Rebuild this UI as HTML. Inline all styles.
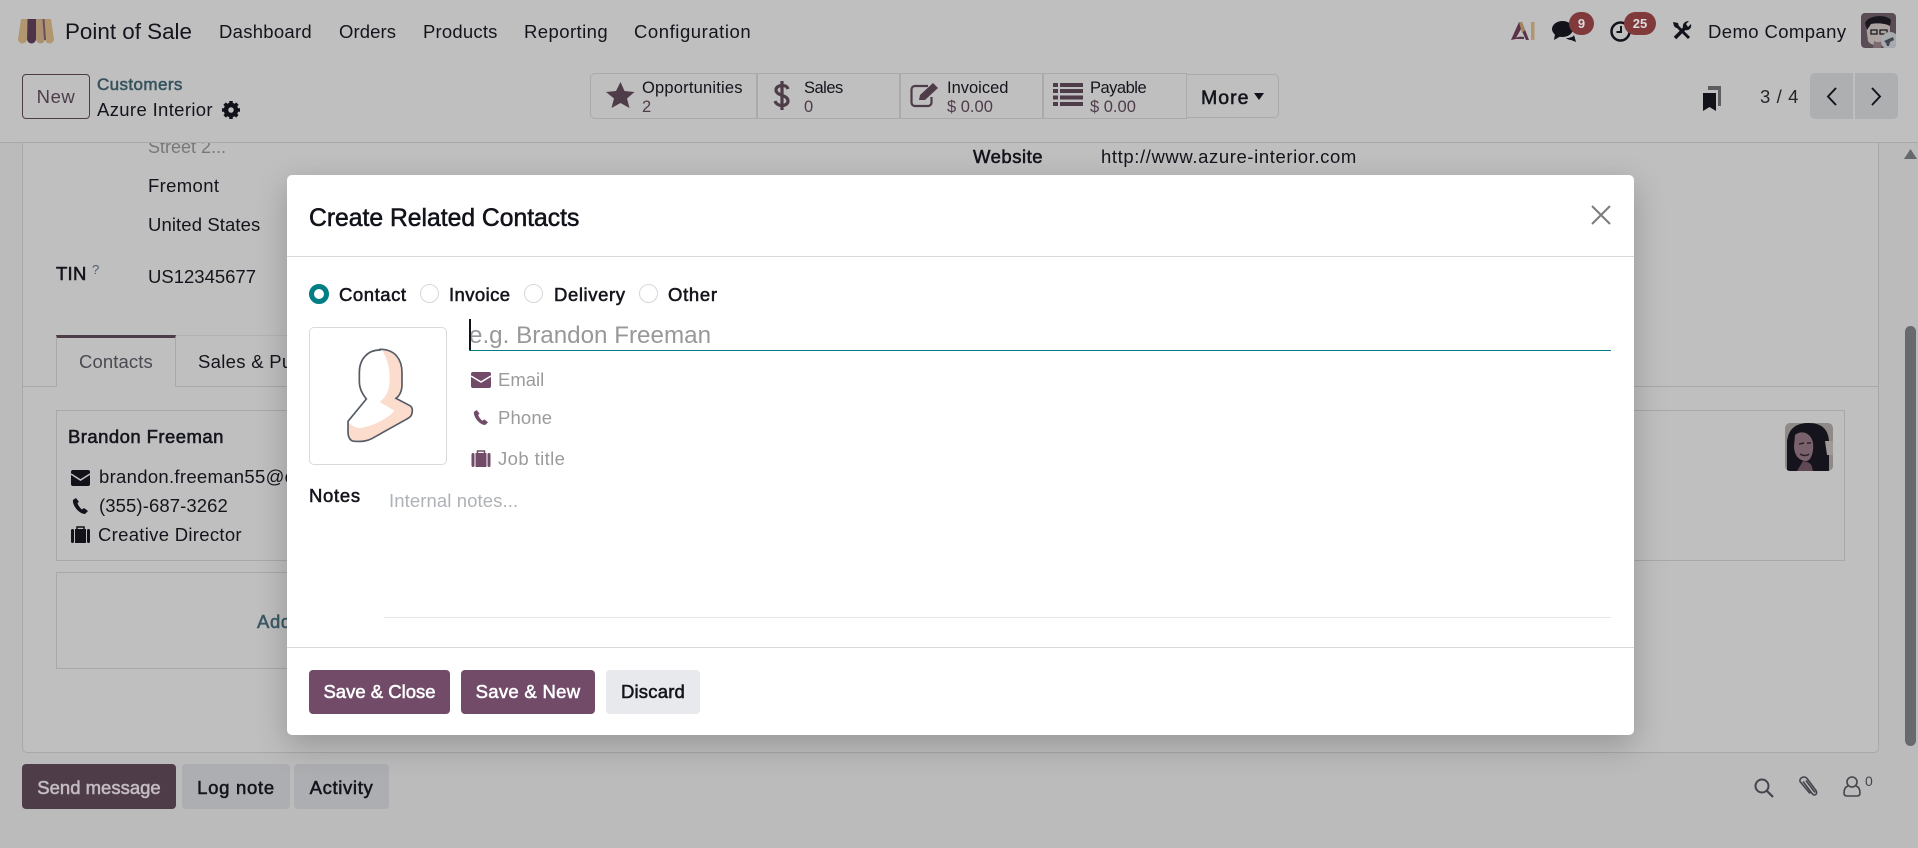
<!DOCTYPE html>
<html lang="en"><head><meta charset="utf-8"><title>Create Related Contacts</title>
<style>
html,body{margin:0;padding:0}
body{width:1918px;height:848px;overflow:hidden;position:relative;background:#bbbbbc;font-family:"Liberation Sans",sans-serif;color:#14151c}
.t{position:absolute;white-space:nowrap;line-height:24px;font-size:18.5px}
.m{-webkit-text-stroke:.55px currentColor}
.b{position:absolute;box-sizing:border-box}
svg{position:absolute;overflow:visible}
#top{position:absolute;left:0;top:0;width:1918px;height:143px;background:#bfbfbf;border-bottom:1px solid #a8a8a8;box-sizing:border-box;z-index:2}
#panel{position:absolute;left:22px;top:142px;width:1857px;height:611px;background:#bfbfbf;border:1px solid #a8a8a8;border-top:none;border-radius:0 0 5px 5px;box-sizing:border-box}
#modal{position:absolute;left:287px;top:175px;width:1347px;height:560px;background:#fff;border-radius:5px;box-shadow:0 10px 32px rgba(0,0,0,.22);z-index:3;overflow:hidden}
#inner{position:absolute;left:0;top:-1px;width:1347px;height:561px}
.radio{position:absolute;box-sizing:border-box;width:19px;height:19px;border-radius:50%;border:1px solid #d4d8dc;background:#fff}
.btn{position:absolute;border-radius:4px;display:flex;align-items:center;justify-content:center;font-size:18.5px;box-sizing:border-box;white-space:nowrap}
</style></head><body>

<div id="panel"></div>

<!-- background form -->
<div class="t" style="left:148px;top:135px;color:#77787a;font-size:18px">Street 2...</div>
<div class="t" style="left:148px;top:174px;letter-spacing:.35px">Fremont</div>
<div class="t" style="left:148px;top:213px;letter-spacing:.1px">United States</div>
<div class="t m" style="left:56px;top:262px;letter-spacing:.25px">TIN</div>
<div class="t" style="left:92px;top:258px;font-size:13px;color:#4f5f72">?</div>
<div class="t" style="left:148px;top:265px">US12345677</div>
<div class="t m" style="left:973px;top:145px;letter-spacing:.5px">Website</div>
<div class="t" style="left:1101px;top:145px;letter-spacing:.6px">http://www.azure-interior.com</div>

<div class="b" style="left:176px;top:335px;width:200px;height:1px;background:#b3b3b3"></div>
<div class="b" style="left:22px;top:386px;width:1857px;height:1px;background:#a8a8a8"></div>
<div class="b" style="left:56px;top:335px;width:120px;height:52px;background:#bfbfbf;border:1px solid #a8a8a8;border-top:3px solid #4e3c49;border-bottom:none"></div>
<div class="t" style="left:79px;top:350px;color:#4a4b52;letter-spacing:.1px">Contacts</div>
<div class="t" style="left:198px;top:350px;letter-spacing:.3px">Sales &amp; Purchase</div>

<div class="b" style="left:56px;top:410px;width:1789px;height:151px;border:1px solid #a8a8a8"></div>
<div class="t m" style="left:68px;top:425px;letter-spacing:.45px">Brandon Freeman</div>
<svg style="left:71px;top:470px" width="19" height="16" viewBox="0 0 19 16"><rect width="19" height="16" rx="2" fill="#11121a"/><path d="M0 4l9.5 6L19 4" fill="none" stroke="#bfbfbf" stroke-width="1.6"/></svg>
<div class="t" style="left:99px;top:465px;letter-spacing:.3px">brandon.freeman55@example.com</div>
<svg style="left:72px;top:498px" width="17" height="16" viewBox="0 0 17 16"><path d="M4 0L1 2c-1 5 6 14 12 14l3-3-4-3-2 1.500C8 10 6 7 5.500 5L7 4z" fill="#11121a"/></svg>
<div class="t" style="left:99px;top:494px;letter-spacing:.1px">(355)-687-3262</div>
<svg style="left:71px;top:526px" width="19" height="17" viewBox="0 0 19 17"><path d="M6 3V1h7v2" fill="none" stroke="#11121a" stroke-width="1.500"/><rect x="0" y="3" width="3" height="14" rx="1.500" fill="#11121a"/><rect x="4" y="3" width="11" height="14" fill="#11121a"/><rect x="16" y="3" width="3" height="14" rx="1.500" fill="#11121a"/></svg>
<div class="t" style="left:98px;top:523px;letter-spacing:.3px">Creative Director</div>
<svg style="left:1785px;top:423px" width="48" height="48" viewBox="0 0 48 48"><defs><clipPath id="av"><rect width="48" height="48" rx="5"/></clipPath></defs><g clip-path="url(#av)"><rect width="48" height="48" fill="#8f8a88"/><path d="M2 48V18C4 3 14 0 24 0c12 0 20 6 20 20v28z" fill="#15131b"/><path d="M10 12c6-5 16-3 18 8 1 9-2 19-8 18-7-1-11-7-11-15z" fill="#7a626c"/><path d="M14 21l5-1M22 20l4 0M15 31c3 2 7 2 9 0" stroke="#2c2028" stroke-width="1.500" fill="none"/><path d="M18 38c5 1 8 2 9 6l1 4H12z" fill="#5f4853"/><path d="M40 18h8v14h-6z" fill="#a09a96"/></g></svg>

<div class="b" style="left:56px;top:572px;width:600px;height:97px;border:1px solid #a8a8a8"></div>
<div class="t m" style="left:257px;top:610px;color:#3c5a66;letter-spacing:.6px">Add</div>

<!-- header -->
<div id="top">
<svg style="left:18px;top:18px" width="36" height="26" viewBox="0 0 36 26">
<path d="M3 1h6.500L9 21a4.500 4.500 0 0 1-9 0z" fill="#b2966f"/>
<path d="M9.500 1H18v20a4.500 4.500 0 0 1-9 0z" fill="#4d3448"/>
<path d="M18 1h7.500L27 21a4.500 4.500 0 0 1-9 0z" fill="#ab9070"/>
<path d="M25.500 1H33l3 20a4.500 4.500 0 0 1-9 0z" fill="#b2966f"/>
<path d="M24.500 1h2L28 22h-2z" fill="#6a4f5a"/>
</svg>
<div class="t" style="left:65px;top:20px;font-size:22.400px">Point of Sale</div>
<div class="t" style="left:219px;top:20px;letter-spacing:.27px">Dashboard</div>
<div class="t" style="left:339px;top:20px;letter-spacing:.1px">Orders</div>
<div class="t" style="left:423px;top:20px;letter-spacing:.2px">Products</div>
<div class="t" style="left:524px;top:20px;letter-spacing:.43px">Reporting</div>
<div class="t" style="left:634px;top:20px;letter-spacing:.55px">Configuration</div>

<svg style="left:1511px;top:21px" width="24" height="20" viewBox="0 0 24 20"><path d="M0 19L8 1h3l7 18h-3l-5-11-5 9c1-1 4-2 8-1v2H5z" fill="#5a3148"/><path d="M8 1h3l3 8-3 3z" fill="#a58561"/><rect x="20" y="1" width="3.500" height="18" fill="#b2966f"/></svg>
<svg style="left:1552px;top:21px" width="26" height="21" viewBox="0 0 26 21"><ellipse cx="10.500" cy="8" rx="10.500" ry="8" fill="#11121a"/><path d="M3 13L2 19l7-4z" fill="#11121a"/><path d="M14 17c4 0 7-1 8-3l2 7-5-2c-2 0-4-1-5-2z" fill="#11121a"/></svg>
<div class="b" style="left:1569px;top:12px;width:25px;height:23px;border-radius:12px;background:#803a3c;color:#ddd;font-size:13px;font-weight:bold;text-align:center;line-height:23px">9</div>
<svg style="left:1610px;top:21px" width="22" height="21" viewBox="0 0 22 21"><circle cx="10.500" cy="10.500" r="9" fill="none" stroke="#11121a" stroke-width="2.500"/><path d="M11 5v6H6.500" fill="none" stroke="#11121a" stroke-width="2"/></svg>
<div class="b" style="left:1624px;top:12px;width:32px;height:23px;border-radius:12px;background:#803a3c;color:#ddd;font-size:13px;font-weight:bold;text-align:center;line-height:23px">25</div>
<svg style="left:1672px;top:21px" width="20" height="20" viewBox="0 0 20 20"><path d="M3 3l14 14" stroke="#11121a" stroke-width="3"/><path d="M1 1l5 1 1 4-3 1-2-2z" fill="#11121a"/><path d="M14 6L3 17" stroke="#11121a" stroke-width="3.500"/><path d="M19 3c1 4-2 7-6 6l-2-2c-1-4 2-7 6-7l-3 3 2 3z" fill="#11121a"/></svg>
<div class="t" style="left:1708px;top:20px;letter-spacing:.4px">Demo Company</div>
<svg style="left:1861px;top:13px" width="35" height="35" viewBox="0 0 35 35"><defs><clipPath id="av2"><rect width="35" height="35" rx="4"/></clipPath></defs><g clip-path="url(#av2)"><rect width="35" height="35" fill="#5a4c54"/><path d="M5 12c2-6 22-6 24 0v16c-2 5-18 7-22 0z" fill="#aaa39f"/><path d="M4 10C7 2 25 1 30 7l-1 6c-5-3-14-3-19-2l-4 6z" fill="#1a171f"/><path d="M10 17h6v4h-6zM19 17h7v4h-7z" fill="none" stroke="#1a171f" stroke-width="1.300"/><path d="M13 28c3 2 6 1 8 0l-1 7H12z" fill="#7d6a70"/><circle cx="29" cy="28" r="9" fill="#a9aaad"/><path d="M23 28l9-4 1 3-4 2-1 4-2 0-1-3z" fill="#3f4650"/></g></svg>

<div class="b" style="left:22px;top:74px;width:68px;height:45px;border:1px solid #4e3c49;border-radius:4px;color:#4e3c49;font-size:18.5px;letter-spacing:.55px;text-align:center;line-height:43px">New</div>
<div class="t m" style="left:97px;top:73px;color:#35525d;font-size:17px;letter-spacing:.4px">Customers</div>
<div class="t" style="left:97px;top:98px;letter-spacing:.35px">Azure Interior</div>
<svg style="left:222px;top:101px" width="18" height="18" viewBox="0 0 18 18"><circle cx="9" cy="9" r="5" fill="none" stroke="#11121a" stroke-width="4.500"/><path d="M9 0v18M0 9h18M2.600 2.600l12.800 12.800M15.400 2.600L2.600 15.400" stroke="#11121a" stroke-width="3.500" stroke-dasharray="3 12"/></svg>

<!-- stat group -->
<div class="b" style="left:590px;top:73px;width:597px;height:46px;border:1.500px solid #aaaaaa;border-radius:5px 0 0 5px;border-right:none"></div>
<div class="b" style="left:756px;top:73px;width:1.500px;height:46px;background:#aaaaaa"></div>
<div class="b" style="left:899px;top:73px;width:1.500px;height:46px;background:#aaaaaa"></div>
<div class="b" style="left:1042px;top:73px;width:1.500px;height:46px;background:#aaaaaa"></div>
<div class="b" style="left:1186px;top:74px;width:93px;height:44px;border:1.500px solid #aaaaaa;border-radius:0 5px 5px 0"></div>

<svg style="left:606px;top:82px" width="29" height="26" viewBox="0 0 29 26"><path d="M14.500 0l4 9 10 1-7.500 6.500 2.500 9.500-9-5-9 5 2.500-9.500L0 10l10-1z" fill="#4e3c49"/></svg>
<div class="t" style="left:642px;top:76px;font-size:16.500px;letter-spacing:.2px">Opportunities</div>
<div class="t" style="left:642px;top:95px;font-size:16.500px;color:#4e3c49">2</div>
<svg style="left:774px;top:81px" width="16" height="29" viewBox="0 0 16 29"><path d="M14 8C13 5 11 4.500 8 4.500S2 6 2 9c0 6 12 4.500 12 11 0 3-3 4.500-6 4.500s-6-1.500-7-4.500M8 0v29" fill="none" stroke="#4e3c49" stroke-width="3.200"/></svg>
<div class="t" style="left:804px;top:76px;font-size:16.500px;letter-spacing:-.5px">Sales</div>
<div class="t" style="left:804px;top:95px;font-size:16.500px;color:#4e3c49">0</div>
<svg style="left:910px;top:82px" width="30" height="25" viewBox="0 0 30 25"><path d="M18 4H5a3.500 3.500 0 0 0-3.500 3.500v13A3.500 3.500 0 0 0 5 24h13a3.500 3.500 0 0 0 3.500-3.500V15" fill="none" stroke="#4e3c49" stroke-width="2.200"/><path d="M9 18l1-5L23 1l5 5-13 12z" fill="#4e3c49"/></svg>
<div class="t" style="left:947px;top:76px;font-size:16.500px">Invoiced</div>
<div class="t" style="left:947px;top:95px;font-size:16.500px;color:#4e3c49">$ 0.00</div>
<svg style="left:1053px;top:83px" width="30" height="23" viewBox="0 0 30 23" fill="#4e3c49"><rect y="0" width="5" height="4"/><rect x="7" y="0" width="23" height="4"/><rect y="6" width="5" height="4"/><rect x="7" y="6" width="23" height="4"/><rect y="12.500" width="5" height="4"/><rect x="7" y="12.500" width="23" height="4"/><rect y="19" width="5" height="4"/><rect x="7" y="19" width="23" height="4"/></svg>
<div class="t" style="left:1090px;top:76px;font-size:16.500px;letter-spacing:-.5px">Payable</div>
<div class="t" style="left:1090px;top:95px;font-size:16.500px;color:#4e3c49">$ 0.00</div>
<div class="t m" style="left:1201px;top:86px;font-size:19.500px;letter-spacing:1px">More</div>
<svg style="left:1254px;top:93px" width="10" height="7" viewBox="0 0 10 7"><path d="M0 0h10L5 7z" fill="#11121a"/></svg>

<svg style="left:1703px;top:86px" width="18" height="25" viewBox="0 0 18 25"><path d="M5 0h13v20h-3V4H5z" fill="#5d5d60"/><path d="M0 7h13v18l-6.500-4L0 25z" fill="#11121a"/></svg>
<div class="t" style="left:1760px;top:85px;letter-spacing:.6px;color:#25262c">3 / 4</div>
<div class="b" style="left:1810px;top:73px;width:43px;height:46px;background:#aeafb1;border-radius:5px 0 0 5px"></div>
<div class="b" style="left:1855px;top:73px;width:43px;height:46px;background:#aeafb1;border-radius:0 5px 5px 0"></div>
<svg style="left:1826px;top:87px" width="11" height="19" viewBox="0 0 11 19"><path d="M10 1L2 9.500 10 18" fill="none" stroke="#11121a" stroke-width="1.900"/></svg>
<svg style="left:1871px;top:87px" width="11" height="19" viewBox="0 0 11 19"><path d="M1 1l8 8.500L1 18" fill="none" stroke="#11121a" stroke-width="1.900"/></svg>
</div>

<!-- scrollbar -->
<svg style="left:1904px;top:149px" width="13" height="10" viewBox="0 0 13 10"><path d="M6.500 0L13 10H0z" fill="#67686b"/></svg>
<div class="b" style="left:1905px;top:326px;width:11px;height:420px;background:#68696c;border-radius:6px"></div>

<!-- chatter -->
<div class="btn m" style="left:22px;top:764px;width:154px;height:45px;padding-top:2px;background:#4e3c49;color:#c3bcc1">Send message</div>
<div class="btn m" style="left:182px;top:764px;width:108px;height:45px;padding-top:2px;letter-spacing:.73px;background:#adaeb1">Log note</div>
<div class="btn m" style="left:294px;top:764px;width:95px;height:45px;padding-top:2px;letter-spacing:.65px;background:#adaeb1">Activity</div>
<svg style="left:1754px;top:778px" width="20" height="20" viewBox="0 0 20 20"><circle cx="8" cy="8" r="6.500" fill="none" stroke="#44444c" stroke-width="2"/><path d="M13 13l6 6" stroke="#44444c" stroke-width="2.200"/></svg>
<svg style="left:1798px;top:775px" width="21" height="23" viewBox="0 0 21 23"><path d="M5 6l9 12c2 3 6 1 4-3L9 3C7 0 1 2 2 6l10 12M8 5l9 12" fill="none" stroke="#44444c" stroke-width="1.600" transform="translate(0 .5)"/></svg>
<svg style="left:1843px;top:776px" width="18" height="21" viewBox="0 0 18 21"><circle cx="9" cy="6" r="5" fill="none" stroke="#44444c" stroke-width="1.600"/><path d="M5 10c-3 1-4 4-4 7 0 2 1 3 3 3h10c2 0 3-1 3-3 0-3-1-6-4-7" fill="none" stroke="#44444c" stroke-width="1.600"/></svg>
<div class="t" style="left:1865px;top:769px;font-size:14px;color:#44444c">0</div>

<!-- modal -->
<div id="modal"><div id="inner">
<div class="t m" style="left:22px;top:33px;font-size:24.700px;line-height:24px;color:#11121a">Create Related Contacts</div>
<svg style="left:1304px;top:31px" width="20" height="20" viewBox="0 0 20 20"><path d="M1 1l18 18M19 1L1 19" stroke="#7f7a7d" stroke-width="2"/></svg>
<div class="b" style="left:0;top:82px;width:1347px;height:1px;background:#d8dadd"></div>

<div class="b" style="left:22px;top:110px;width:20px;height:20px;border-radius:50%;border:5.500px solid #017e84;background:#fff"></div>
<div class="t m" style="left:52px;top:109px;letter-spacing:.55px">Contact</div>
<div class="radio" style="left:133px;top:110px"></div>
<div class="t m" style="left:162px;top:109px;letter-spacing:.4px">Invoice</div>
<div class="radio" style="left:237px;top:110px"></div>
<div class="t m" style="left:267px;top:109px;letter-spacing:.6px">Delivery</div>
<div class="radio" style="left:352px;top:110px"></div>
<div class="t m" style="left:381px;top:109px;letter-spacing:.7px">Other</div>

<div class="b" style="left:22px;top:153px;width:138px;height:138px;border:1px solid #d8dadd;border-radius:5px;background:#fff"></div>
<svg style="left:3px;top:96px" width="420" height="260" viewBox="0 0 1260 780">
<path d="M270 238c45 0 66 30 66 70v35c0 18-5 32-18 42l42 22c8 5 8 16 5 26-2 8-8 10-16 15l-104 58c-15 8-30 9-51 8-15-1-20-12-20-30v-30l55-67c-12-15-21-30-21-50v-30c0-40 25-67 62-67z" fill="#fbdccd"/>
<path d="M276 240c18 28 24 60 23 90-1 30-8 48-30 66l44 26c-14 20-60 45-100 52-15 2-30-8-38-18l57-71c-12-15-21-30-21-50v-30c0-35 25-65 65-65z" fill="#fff"/>
<path d="M270 238c45 0 66 30 66 70v35c0 18-5 32-18 42l42 22c8 5 8 16 5 26-2 8-8 10-16 15l-104 58c-15 8-30 9-51 8-15-1-20-12-20-30v-30l55-67c-12-15-21-30-21-50v-30c0-40 25-67 62-67z" fill="none" stroke="#555c66" stroke-width="5"/>
</svg>

<div class="t" style="left:182px;top:148px;font-size:24.200px;line-height:28px;color:#989898">e.g. Brandon Freeman</div>
<div class="b" style="left:182px;top:145px;width:1.500px;height:31px;background:#11121a"></div>
<div class="b" style="left:182px;top:175.500px;width:1142px;height:1.500px;background:#017e84"></div>

<svg style="left:184px;top:198px" width="20" height="16" viewBox="0 0 20 16"><rect width="20" height="16" rx="2" fill="#714b67"/><path d="M0 4l10 6 10-6" fill="none" stroke="#fff" stroke-width="1.600"/></svg>
<div class="t" style="left:211px;top:194px;color:#9b9b9b">Email</div>
<svg style="left:186px;top:236px" width="16" height="15" viewBox="0 0 17 16"><path d="M4 0L1 2c-1 5 6 14 12 14l3-3-4-3-2 1.500C8 10 6 7 5.500 5L7 4z" fill="#714b67"/></svg>
<div class="t" style="left:211px;top:232px;color:#9b9b9b;letter-spacing:.15px">Phone</div>
<svg style="left:184px;top:276px" width="20" height="17" viewBox="0 0 19 17"><path d="M6 3V1h7v2" fill="none" stroke="#714b67" stroke-width="1.500"/><rect x="0" y="3" width="3" height="14" rx="1.500" fill="#714b67"/><rect x="4" y="3" width="11" height="14" fill="#714b67"/><rect x="16" y="3" width="3" height="14" rx="1.500" fill="#714b67"/></svg>
<div class="t" style="left:211px;top:273px;color:#9b9b9b;letter-spacing:.4px">Job title</div>

<div class="t m" style="left:22px;top:310px;letter-spacing:.7px">Notes</div>
<div class="t" style="left:102px;top:315px;color:#aeb2b6;letter-spacing:.1px">Internal notes...</div>
<div class="b" style="left:97px;top:443px;width:1227px;height:1px;background:#e4e5e7"></div>
<div class="b" style="left:0;top:473px;width:1347px;height:1px;background:#d8dadd"></div>

<div class="btn m" style="left:22px;top:496px;width:141px;height:44px;background:#714b67;color:#fff">Save &amp; Close</div>
<div class="btn m" style="left:174px;top:496px;width:134px;height:44px;background:#714b67;color:#fff;letter-spacing:.3px">Save &amp; New</div>
<div class="btn m" style="left:319px;top:496px;width:94px;height:44px;background:#e7e9ed;color:#14151c;letter-spacing:.2px">Discard</div>
</div></div>
</body></html>
